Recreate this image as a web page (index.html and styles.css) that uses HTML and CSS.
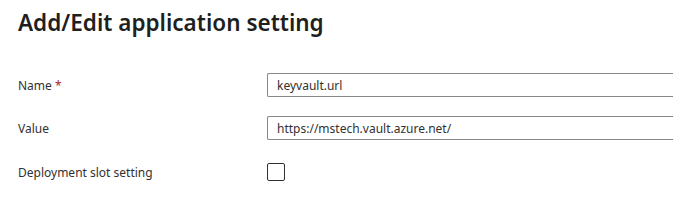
FILE: index.html
```html
<!DOCTYPE html>
<html lang="en">
  <head>
    <meta charset="UTF-8" />
    <meta name="viewport" content="width=device-width, initial-scale=1.0" />
    <title>Add/Edit application setting</title>
    <link rel="stylesheet" href="styles.css">
  </head>
  <body>
    <div class="panel">
      <h2 class="title">Add/Edit application setting</h2>
      <!-- form fields -->
      <div class="form">
        <div class="row">
          <label class="label">Name <span class="req">*</span></label>
          <input class="field" type="text" value="keyvault.url" />
        </div>
        <div class="row">
          <label class="label">Value</label>
          <input class="field" type="text" value="https://mstech.vault.azure.net/" />
        </div>
        <div class="row check-row">
          <label class="label">Deployment slot setting</label>
          <span class="checkbox"></span>
        </div>
      </div>
    </div>
  </body>
</html>
```

FILE: styles.css
```css
body {
  margin: 0;
  background: #fff;
  font-family: "Noto Sans", "Open Sans", sans-serif;
  color: #323130;
  overflow: hidden;
}

.panel {
  padding: 6px 0 0 18px;
}

.title {
  margin: 0;
  font-size: 22.5px;
  font-weight: 600;
  line-height: 34px;
  color: #201f1e;
}

.form {
  margin-top: 33px;
  display: flex;
  flex-direction: column;
  gap: 19px;
}

.row {
  display: flex;
  align-items: center;
  height: 24px;
}

.label {
  width: 249px;
  flex-shrink: 0;
  font-size: 12px;
  color: #323130;
}

.req {
  color: #a4262c;
}

.field {
  box-sizing: border-box;
  flex: 1;
  min-width: 0;
  height: 24px;
  border: 1px solid #8a8886;
  border-right: none;
  border-radius: 2px 0 0 2px;
  padding: 0 9px;
  font-family: inherit;
  font-size: 12px;
  color: #323130;
  outline: none;
}

.check-row {
  height: 18px;
  margin-top: 4px;
}

.checkbox {
  box-sizing: border-box;
  width: 18px;
  height: 18px;
  border: 1px solid #323130;
  border-radius: 2px;
}
```
